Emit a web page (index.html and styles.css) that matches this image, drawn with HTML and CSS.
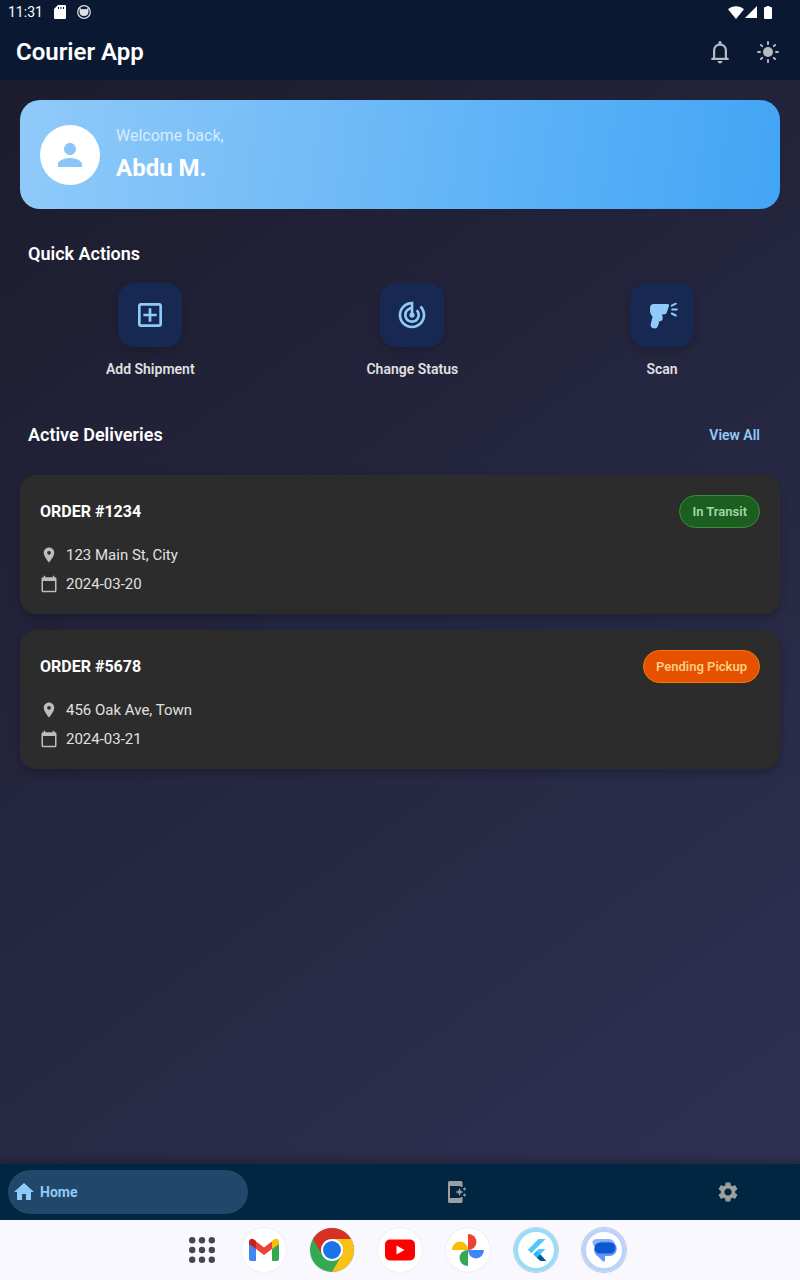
FILE: index.html
```html
<!DOCTYPE html>
<html lang="en">
<head>
<meta charset="utf-8">
<meta name="viewport" content="width=device-width, initial-scale=1">
<title>Courier App</title>
<link rel="stylesheet" href="styles.css">
</head>
<body>
<div class="screen">
  <header class="top">
    <div class="status">
      <time>11:31</time>
      <svg class="sd" viewBox="0 0 12 14"><path fill="#fff" d="M4 0h7a1 1 0 0 1 1 1v12a1 1 0 0 1-1 1H1a1 1 0 0 1-1-1V4z"/><path stroke="#0a1931" d="M4.500 2v2M7 2v2M9.500 2v2"/></svg>
      <svg class="cat" viewBox="0 0 14 14"><circle cx="7" cy="7" r="6.300" fill="none" stroke="#dfe3ea" stroke-width="1.200"/><path fill="#dfe3ea" d="M2.500 2.500l2.200 2 1.100-.8 1.200.8 1.200-.8 1.100.8 2.200-2v3.700C11.500 9.500 9.800 11 7 11S2.500 9.500 2.500 6.200z"/></svg>
      <span class="spacer"></span>
      <svg class="wifi" viewBox="0 0 16 13"><path fill="#fff" d="M8 13L0 3.200C4.500-.9 11.500-.9 16 3.200z"/></svg>
      <svg class="signal" viewBox="0 0 12 12"><path fill="#fff" d="M12 0v12H0z"/></svg>
      <svg class="battery" viewBox="0 0 8 13"><path fill="#fff" d="M2.500 0h3v1H7a1 1 0 0 1 1 1v10a1 1 0 0 1-1 1H1a1 1 0 0 1-1-1V2a1 1 0 0 1 1-1h1.500z"/></svg>
    </div>
    <div class="appbar">
      <h1>Courier App</h1>
      <button class="icon-btn" aria-label="Notifications"><svg viewBox="0 0 24 24"><path fill="none" stroke="currentColor" stroke-width="2.200" stroke-linecap="round" d="M6.100 18v-7.300C6.100 7 8.500 4.600 12 4.600s5.900 2.400 5.900 6.100V18M4.200 18.900h15.600"/><path fill="currentColor" d="M10.400 4V2.500a1.600 1.600 0 0 1 3.200 0V4zM9.600 21h4.800a2.400 2.400 0 0 1-4.800 0z"/></svg></button>
      <button class="icon-btn" aria-label="Toggle light mode"><svg viewBox="0 0 24 24"><circle cx="12" cy="12" r="5" fill="currentColor"/><path stroke="currentColor" stroke-width="2" stroke-linecap="round" d="M12 2v2M12 20v2M2 12h2M20 12h2M5 5l1.100 1.100M17.900 17.900L19 19M5 19l1.100-1.100M17.900 6.100L19 5"/></svg></button>
    </div>
  </header>

  <main class="content">
    <section class="hero">
      <div class="avatar"><svg viewBox="0 0 24 24"><path fill="currentColor" d="M12 12c2.210 0 4-1.790 4-4s-1.790-4-4-4-4 1.790-4 4 1.790 4 4 4zm0 2c-2.670 0-8 1.340-8 4v2h16v-2c0-2.660-5.330-4-8-4z"/></svg></div>
      <div>
        <p class="greeting">Welcome back,</p>
        <p class="name">Abdu M.</p>
      </div>
    </section>

    <section>
      <h2 class="quick-title">Quick Actions</h2>
      <div class="actions">
        <button class="action"><span class="tile"><svg viewBox="0 0 24 24"><path fill="currentColor" d="M19 3H5c-1.110 0-2 .9-2 2v14c0 1.100.89 2 2 2h14c1.100 0 2-.9 2-2V5c0-1.100-.9-2-2-2zm0 16H5V5h14v14zm-8-2h2v-4h4v-2h-4V7h-2v4H7v2h4z"/></svg></span>Add Shipment</button>
        <button class="action"><span class="tile"><svg viewBox="0 0 24 24"><path fill="currentColor" d="M19.070 4.930l-1.410 1.410C19.100 7.790 20 9.790 20 12c0 4.420-3.580 8-8 8s-8-3.580-8-8c0-4.080 3.050-7.440 7-7.930v2.020C8.160 6.570 6 9.030 6 12c0 3.310 2.690 6 6 6s6-2.690 6-6c0-1.660-.67-3.160-1.760-4.240l-1.410 1.410C15.550 9.900 16 10.900 16 12c0 2.210-1.790 4-4 4s-4-1.790-4-4c0-1.860 1.280-3.410 3-3.860v2.140c-.6.350-1 .98-1 1.720 0 1.100.9 2 2 2s2-.9 2-2c0-.74-.4-1.380-1-1.720V2h-1C6.480 2 2 6.480 2 12s4.480 10 10 10 10-4.480 10-10c0-2.760-1.120-5.260-2.930-7.070z"/></svg></span>Change Status</button>
        <button class="action"><span class="tile"><svg viewBox="0 0 32 32"><path fill="currentColor" d="M8 5h13.500a1.500 1.500 0 0 1 1.500 2l-2.200 6.500a3 3 0 0 1-2.800 2h-2c-.3 1 .8 1 .3 2 .8.500.3 1.300.3 2.200 0 1.600-.8 2.300-3 2.300-.8 1.800-.8 3-1.400 4.500A4 4 0 0 1 8.500 29.400c-2.700 0-4.300-1.900-3.700-4.700l1.800-7C4.800 16 4 14 4 11V9c0-2.500 1.500-4 4-4z"/><path stroke="currentColor" stroke-width="2" stroke-linecap="round" d="M25.800 6.700l4-2M26.200 10.600h4.600M25.800 14.500l4 2"/></svg></span>Scan</button>
      </div>
    </section>

    <section>
      <div class="section-head">
        <h2>Active Deliveries</h2>
        <a href="#all">View All</a>
      </div>
      <div class="orders">
        <article class="order">
          <div class="order-head"><h3>ORDER #1234</h3><span class="badge transit">In Transit</span></div>
          <p class="detail"><svg viewBox="0 0 24 24"><path fill="currentColor" d="M12 2C8.130 2 5 5.130 5 9c0 5.250 7 13 7 13s7-7.750 7-13c0-3.870-3.130-7-7-7zm0 9.500c-1.380 0-2.500-1.120-2.500-2.500s1.120-2.500 2.500-2.500 2.500 1.120 2.500 2.500-1.120 2.500-2.500 2.500z"/></svg>123 Main St, City</p>
          <p class="detail"><svg viewBox="0 0 24 24"><path fill="currentColor" d="M20 3h-1V1h-2v2H7V1H5v2H4c-1.100 0-2 .9-2 2v16c0 1.100.9 2 2 2h16c1.100 0 2-.9 2-2V5c0-1.100-.9-2-2-2zm0 18H4V8h16v13z"/></svg>2024-03-20</p>
        </article>
        <article class="order">
          <div class="order-head"><h3>ORDER #5678</h3><span class="badge pending">Pending Pickup</span></div>
          <p class="detail"><svg viewBox="0 0 24 24"><path fill="currentColor" d="M12 2C8.130 2 5 5.130 5 9c0 5.250 7 13 7 13s7-7.750 7-13c0-3.870-3.130-7-7-7zm0 9.500c-1.380 0-2.500-1.120-2.500-2.500s1.120-2.500 2.500-2.500 2.500 1.120 2.500 2.500-1.120 2.500-2.500 2.500z"/></svg>456 Oak Ave, Town</p>
          <p class="detail"><svg viewBox="0 0 24 24"><path fill="currentColor" d="M20 3h-1V1h-2v2H7V1H5v2H4c-1.100 0-2 .9-2 2v16c0 1.100.9 2 2 2h16c1.100 0 2-.9 2-2V5c0-1.100-.9-2-2-2zm0 18H4V8h16v13z"/></svg>2024-03-21</p>
        </article>
      </div>
    </section>
  </main>

  <nav class="nav" aria-label="Main">
    <a class="tab active" href="#home"><svg viewBox="0 0 24 24"><path fill="currentColor" d="M10 20v-6h4v6h5v-8h3L12 3 2 12h3v8z"/></svg>Home</a>
    <a class="tab" href="#shipments" aria-label="Shipments"><svg viewBox="0 0 24 24"><path fill="currentColor" d="M5.500 1h11.500A1.500 1.500 0 0 1 18.500 2.500V7h-2V6H6v12h10.500v-1h2v4.500a1.500 1.500 0 0 1-1.500 1.500H5.500A1.500 1.500 0 0 1 4 21.500v-19A1.500 1.500 0 0 1 5.500 1z"/><path fill="currentColor" d="M15.500 8.500l1 2.500 2.500 1-2.500 1-1 2.500-1-2.500-2.500-1 2.500-1zM20.500 7.500l.5 1 1 .5-1 .5-.5 1-.5-1-1-.5 1-.5zM20.500 13.500l.5 1 1 .5-1 .5-.5 1-.5-1-1-.5 1-.5z" stroke="currentColor" stroke-width=".5"/></svg></a>
    <a class="tab" href="#settings" aria-label="Settings"><svg viewBox="0 0 24 24"><path fill="currentColor" d="M19.140 12.940c.04-.3.060-.61.060-.94 0-.32-.02-.64-.07-.94l2.030-1.580c.18-.14.230-.41.120-.61l-1.920-3.320c-.12-.22-.37-.29-.59-.22l-2.390.96c-.5-.38-1.030-.7-1.620-.94l-.36-2.540c-.04-.24-.24-.41-.48-.41h-3.840c-.24 0-.43.170-.47.410l-.36 2.540c-.59.240-1.130.570-1.620.94l-2.390-.96c-.22-.08-.47 0-.59.220L2.740 8.870c-.12.210-.08.470.12.610l2.030 1.580c-.05.300-.09.630-.09.940s.02.640.070.940l-2.030 1.580c-.18.140-.23.410-.12.610l1.920 3.320c.12.220.370.290.590.220l2.390-.96c.5.380 1.030.700 1.620.940l.36 2.540c.05.240.240.410.480.410h3.840c.24 0 .44-.17.470-.41l.36-2.540c.59-.24 1.130-.56 1.620-.94l2.390.96c.22.080.470 0 .59-.22l1.920-3.320c.12-.22.070-.47-.12-.61l-2.010-1.580zM12 15.600c-1.980 0-3.600-1.620-3.600-3.600s1.620-3.600 3.600-3.600 3.600 1.620 3.600 3.600-1.620 3.600-3.600 3.600z"/></svg></a>
  </nav>

  <footer class="dock">
    <button class="all-apps" aria-label="All apps"><svg viewBox="0 0 26 26" fill="#45464f"><circle cx="3.200" cy="3.200" r="3.200"/><circle cx="13" cy="3.200" r="3.200"/><circle cx="22.800" cy="3.200" r="3.200"/><circle cx="3.200" cy="13" r="3.200"/><circle cx="13" cy="13" r="3.200"/><circle cx="22.800" cy="13" r="3.200"/><circle cx="3.200" cy="22.800" r="3.200"/><circle cx="13" cy="22.800" r="3.200"/><circle cx="22.800" cy="22.800" r="3.200"/></svg></button>
    <button class="app" aria-label="Gmail"><svg viewBox="0 0 44 44"><path fill="#4285f4" d="M7 15l7 5v13H9a2 2 0 0 1-2-2z"/><path fill="#34a853" d="M30 20l7-5v16a2 2 0 0 1-2 2h-5z"/><path fill="#ea4335" d="M13.500 13l8.500 6.500 8.500-6.500v7.500L22 27l-8.500-6.500z"/><path fill="#c5221f" d="M7 14c0-3 3-4 5-2.500l2 1.500v8l-7-5z"/><path fill="#fbbc04" d="M37 14c0-3-3-4-5-2.500L30 13v8l7-5z"/></svg></button>
    <button class="app" aria-label="Chrome"><svg viewBox="0 0 44 44"><circle cx="22" cy="22" r="22" fill="#34a853"/><path fill="#fbc116" d="M22 44A22 22 0 0 0 41.050 11H22l9.500 16.500z"/><path fill="#d93025" d="M41.050 11A22 22 0 0 0 2.950 11l9.500 16.500L22 11z"/><circle cx="22" cy="22" r="11" fill="#fff"/><circle cx="22" cy="22" r="9" fill="#1a73e8"/></svg></button>
    <button class="app" aria-label="YouTube"><svg viewBox="0 0 44 44"><rect x="7" y="11.500" width="30" height="21" rx="5" fill="#f00"/><path fill="#fff" d="M18.500 17.500v9l8-4.500z"/></svg></button>
    <button class="app" aria-label="Photos"><svg viewBox="0 0 44 44"><path fill="#ea4335" d="M22 6a8.500 8 0 0 1 0 16z"/><path fill="#4285f4" d="M38 22a8 8.500 0 0 1-16 0z"/><path fill="#34a853" d="M22 38a8.500 8 0 0 1 0-16z"/><path fill="#fbbc04" d="M6 22a8 8.500 0 0 1 16 0z"/></svg></button>
    <button class="app flutter" aria-label="Flutter"><svg viewBox="0 0 44 44"><path fill="#54c5f8" d="M24.500 11h7L17.300 25.200l-3.500-3.500zM24.500 21h7L22.800 29.700l-3.500-3.500z"/><path fill="#29b6f6" d="M19.300 26.200l3.500-3.500 3.500 3.500-3.500 3.500z"/><path fill="#01579b" d="M22.800 29.700l3.500-3.500 6 6.800h-6z"/></svg></button>
    <button class="app messages" aria-label="Messages"><svg viewBox="0 0 44 44"><path fill="#8ab0fb" d="M15 11h12a6 6 0 0 1 6 6v4H18c-4.500 0-7.500-3.500-7.500-7 0-2 2-3 4.500-3z"/><path fill="#6497f8" d="M19 13.500h8.500a7 7 0 0 1 0 14.500H23v4.500a1.300 1.300 0 0 1-2.200.8L16 28.500c-2.500-1.500-4-4-4-7.500z"/><rect x="12.500" y="14.500" width="21" height="11" rx="5.500" fill="#0b57d0"/></svg></button>
  </footer>
</div>
</body>
</html>
```

FILE: styles.css
```css
* { box-sizing: border-box; }

body, h1, h2, h3, p { margin: 0; }

body {
  font-family: Roboto, "Noto Sans", sans-serif;
  font-size: 15px;
  color: #fff;
}

button {
  padding: 0;
  border: 0;
  background: none;
  color: inherit;
  font: inherit;
  cursor: pointer;
}

a { color: inherit; text-decoration: none; }

svg { display: block; flex: none; }

.screen {
  display: flex;
  flex-direction: column;
  min-height: 100vh;
}

.top { background: #0a1931; }

.status {
  display: flex;
  align-items: center;
  height: 24px;
  padding: 0 28px 0 8px;
  font-size: 14px;
}

.spacer { flex: 1; }
.sd { width: 12px; height: 14px; margin-left: 11px; }
.cat { width: 14px; height: 14px; margin-left: 11px; }
.wifi { width: 16px; height: 13px; }
.signal { width: 12px; height: 12px; margin-left: 1px; }
.battery { width: 8px; height: 13px; margin-left: 7px; }

.appbar {
  display: flex;
  align-items: center;
  height: 56px;
  padding: 0 8px 0 16px;
}

h1 {
  flex: 1;
  font-size: 24px;
  font-weight: 600;
}

.icon-btn {
  display: grid;
  place-items: center;
  width: 48px;
  height: 48px;
  color: #b6bac1;
}

.icon-btn svg { width: 24px; height: 24px; }

.content {
  flex: 1;
  padding: 20px;
  background: linear-gradient(144deg, #1c1c2e, #2e3152);
}

.hero {
  display: flex;
  align-items: center;
  gap: 16px;
  padding: 22px 20px 21px;
  border-radius: 20px;
  background: linear-gradient(98deg, #90caf9, #42a5f5);
}

.avatar {
  display: grid;
  place-items: center;
  width: 60px;
  height: 60px;
  border-radius: 50%;
  background: #fff;
  color: #8cc6f9;
}

.avatar svg { width: 36px; height: 36px; }

.greeting {
  font-size: 16px;
  line-height: 28px;
  color: rgba(255, 255, 255, 0.7);
}

.name {
  padding-bottom: 2px;
  font-size: 24px;
  font-weight: 700;
  line-height: 36px;
}

h2 {
  font-size: 18px;
  font-weight: 600;
  line-height: 24px;
}

.quick-title { margin: 33px 8px 17px; }

.actions {
  display: flex;
  justify-content: space-around;
}

.action {
  display: flex;
  flex-direction: column;
  align-items: center;
  gap: 12px;
  font-size: 14px;
  font-weight: 600;
  line-height: 20px;
  color: #e0e0e0;
}

.tile {
  display: grid;
  place-items: center;
  width: 64px;
  height: 64px;
  border-radius: 16px;
  background: #172952;
  color: #90caf9;
  box-shadow: 0 4px 8px rgba(0, 0, 0, 0.15);
}

.tile svg { width: 32px; height: 32px; }

.section-head {
  display: flex;
  align-items: center;
  justify-content: space-between;
  height: 48px;
  margin: 32px 20px 16px 8px;
}

.section-head a {
  font-size: 14px;
  font-weight: 600;
  color: #90caf9;
}

.orders {
  display: flex;
  flex-direction: column;
  gap: 16px;
}

.order {
  padding: 20px 20px 19px;
  border-radius: 16px;
  background: #2c2c2c;
  box-shadow: 0 4px 10px rgba(0, 0, 0, 0.2);
}

.order-head {
  display: flex;
  align-items: center;
  justify-content: space-between;
  margin-bottom: 16px;
}

h3 {
  font-size: 16px;
  font-weight: 700;
}

.badge {
  padding: 0 12px;
  border: 1px solid;
  border-radius: 20px;
  font-size: 13px;
  font-weight: 600;
  line-height: 31px;
}

.transit {
  border-color: #388e3c;
  background: #1b5e20;
  color: #a5d6a7;
}

.pending {
  border-color: #f57c00;
  background: #e65100;
  color: #ffcc80;
}

.detail {
  display: flex;
  align-items: center;
  gap: 8px;
  line-height: 22px;
  color: #e0e0e0;
}

.detail + .detail { margin-top: 7px; }

.detail svg {
  width: 18px;
  height: 18px;
  color: #bdbdbd;
}

.nav {
  display: flex;
  align-items: center;
  justify-content: space-between;
  height: 56px;
  padding: 0 8px;
  background: #002642;
  box-shadow: 0 -2px 10px rgba(0, 0, 0, 0.3);
}

.tab {
  display: flex;
  align-items: center;
  justify-content: center;
  gap: 4px;
  width: 128px;
  height: 44px;
  color: #9e9e9e;
}

.tab svg { width: 24px; height: 24px; }

.active {
  justify-content: flex-start;
  width: 240px;
  padding-left: 4px;
  border-radius: 22px;
  background: #21486a;
  color: #90caf9;
  font-size: 14px;
  font-weight: 700;
}

.dock {
  display: flex;
  align-items: center;
  justify-content: center;
  gap: 24px;
  height: 60px;
  padding-left: 12px;
  background: #faf8ff;
}

.all-apps {
  display: grid;
  place-items: center;
  width: 32px;
  height: 44px;
}

.all-apps svg { width: 26px; height: 26px; }

.app {
  width: 44px;
  height: 44px;
  border-radius: 50%;
  background: #fff;
  box-shadow: 0 0 2px rgba(0, 0, 0, 0.12);
}

.flutter { box-shadow: inset 0 0 0 4px #97dcf9, 0 0 0 1px #c3cfd8; }
.messages { box-shadow: inset 0 0 0 4px #b9d3fb, 0 0 0 1px #c4cad8; }
```
